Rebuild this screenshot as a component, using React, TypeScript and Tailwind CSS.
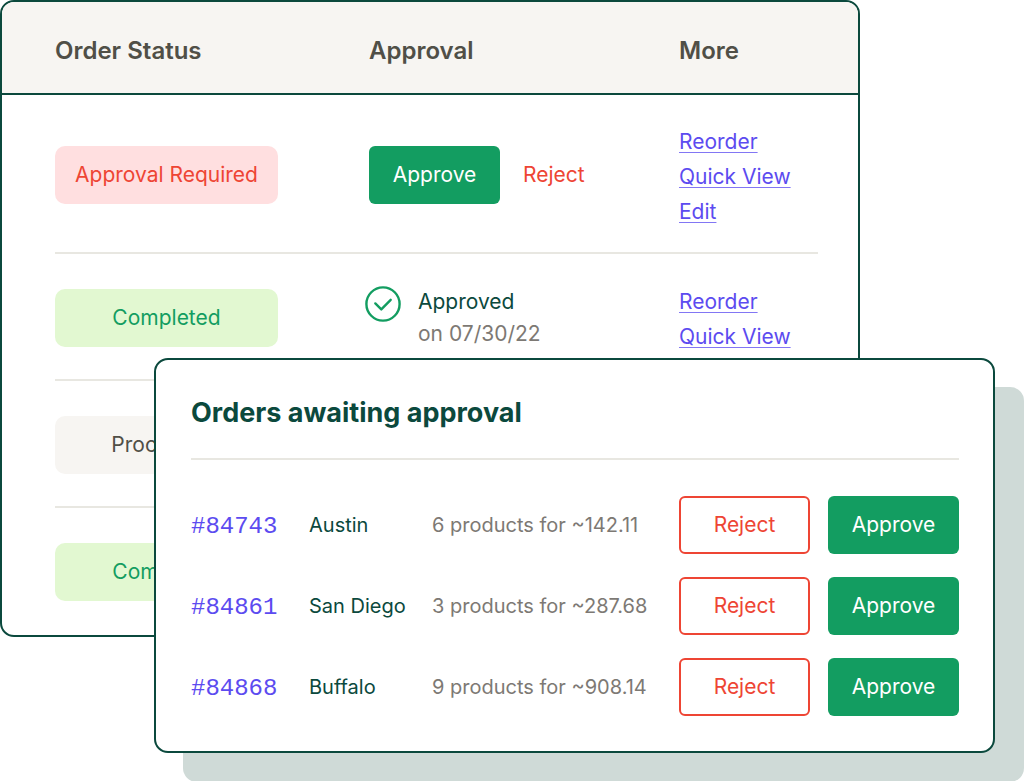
import React from "react";

type Status = "required" | "completed" | "processing";

interface Order {
  status: Status;
  approvedOn?: string;
  links: string[];
}

const orders: Order[] = [
  { status: "required", links: ["Reorder", "Quick View", "Edit"] },
  { status: "completed", approvedOn: "07/30/22", links: ["Reorder", "Quick View"] },
  { status: "processing", links: [] },
  { status: "completed", links: [] },
];

const awaiting = [
  { id: "#84743", city: "Austin", summary: "6 products for ~142.11" },
  { id: "#84861", city: "San Diego", summary: "3 products for ~287.68" },
  { id: "#84868", city: "Buffalo", summary: "9 products for ~908.14" },
];

const badges = {
  required: { label: "Approval Required", style: "bg-[#ffdfe0] text-[#ee4534]" },
  completed: { label: "Completed", style: "bg-[#e2f8d1] text-[#139d61]" },
  processing: { label: "Processing", style: "bg-[#f7f5f2] text-[#504f47]" },
};

// each cell draws its own piece of the row divider, inset at both ends
const divider =
  "relative after:absolute after:bottom-0 after:h-[2px] after:bg-[#e8e7e1] group-last:after:hidden";

const StatusBadge = ({ status }: { status: Status }) => (
  <span
    className={`flex h-[58px] w-[223px] items-center justify-center rounded-[10px] ${badges[status].style}`}
  >
    {badges[status].label}
  </span>
);

const ApproveButton = () => (
  <button className="h-[58px] w-[131px] rounded-md bg-[#139d61] text-white">Approve</button>
);

const CheckIcon = () => (
  <svg width="36" height="36" viewBox="0 0 36 36" fill="none" stroke="#139d61" strokeWidth="2.4">
    <circle cx="18" cy="18" r="16.6" />
    <path d="M10.3 17.4l6 6 9.4-9.6" strokeLinecap="round" strokeLinejoin="round" />
  </svg>
);

const Approval = ({ order }: { order: Order }) => {
  if (order.status === "required") {
    return (
      <div className="flex items-center gap-[23px]">
        <ApproveButton />
        <button className="text-[#ee4534]">Reject</button>
      </div>
    );
  }
  if (order.approvedOn) {
    return (
      <div className="-ml-1 flex items-start gap-[17px]">
        <CheckIcon />
        <div className="leading-[32px]">
          <p className="text-[#0b493d]">Approved</p>
          <p className="text-[#7d7974]">on {order.approvedOn}</p>
        </div>
      </div>
    );
  }
  return null;
};

const OrdersTable = () => (
  <section className="w-[84%] overflow-hidden rounded-[14px] border-2 border-[#0b493d] bg-white">
    <table className="w-full table-fixed text-left">
      <thead>
        <tr className="h-[92px] border-b-2 border-[#0b493d] bg-[#f7f5f2] text-[24px] text-[#504f47]">
          <th className="w-[367px] pl-[53px] pt-[6px] font-semibold">Order Status</th>
          <th className="w-[310px] pt-[6px] font-semibold">Approval</th>
          <th className="pt-[6px] font-semibold">More</th>
        </tr>
      </thead>
      <tbody>
        {orders.map((order, i) => (
          <tr key={i} className="group h-[127px] first:h-[160px]">
            <td className={`${divider} pl-[53px] after:left-[53px] after:right-0`}>
              <StatusBadge status={order.status} />
            </td>
            <td className={`${divider} after:left-0 after:right-0`}>
              <Approval order={order} />
            </td>
            <td className={`${divider} pt-[3px] after:left-0 after:right-[40px]`}>
              <ul className="leading-[35px]">
                {order.links.map((link) => (
                  <li key={link}>
                    <a
                      href="#"
                      className="text-[#5c4bf0] underline decoration-[#8276f4] decoration-1 underline-offset-[3px]"
                    >
                      {link}
                    </a>
                  </li>
                ))}
              </ul>
            </td>
          </tr>
        ))}
      </tbody>
    </table>
  </section>
);

const AwaitingCard = () => (
  <section className="relative -mt-[279px] mb-[29px] ml-[154px] mr-[29px] rounded-[14px] border-2 border-[#0b493d] bg-white pb-6 pl-[35px] pr-[34px] shadow-[29px_29px_0_#cfdad7]">
    <h2 className="flex h-[100px] items-center border-b-2 border-[#e8e7e1] pt-2 text-[27px] font-bold text-[#0b493d]">
      Orders awaiting approval
    </h2>
    <table className="mt-6 w-full table-fixed whitespace-nowrap text-left text-[20px]">
      <tbody>
        {awaiting.map((row) => (
          <tr key={row.id} className="h-[81px]">
            <td className="w-[118px] pt-1 font-['Liberation_Mono',monospace] text-[24px] text-[#5c4bf0]">
              {row.id}
            </td>
            <td className="w-[123px] text-[#0b493d]">{row.city}</td>
            <td className="text-[#7d7974]">{row.summary}</td>
            <td className="w-[280px] text-[21px]">
              <div className="flex justify-between">
                <button className="h-[58px] w-[131px] rounded-md border-2 border-[#ee4534] text-[#ee4534]">
                  Reject
                </button>
                <ApproveButton />
              </div>
            </td>
          </tr>
        ))}
      </tbody>
    </table>
  </section>
);

const App = () => {
  return (
    <main className="flow-root overflow-hidden bg-white font-['Inter',sans-serif] text-[21px]">
      <OrdersTable />
      <AwaitingCard />
    </main>
  );
};

export default App;
